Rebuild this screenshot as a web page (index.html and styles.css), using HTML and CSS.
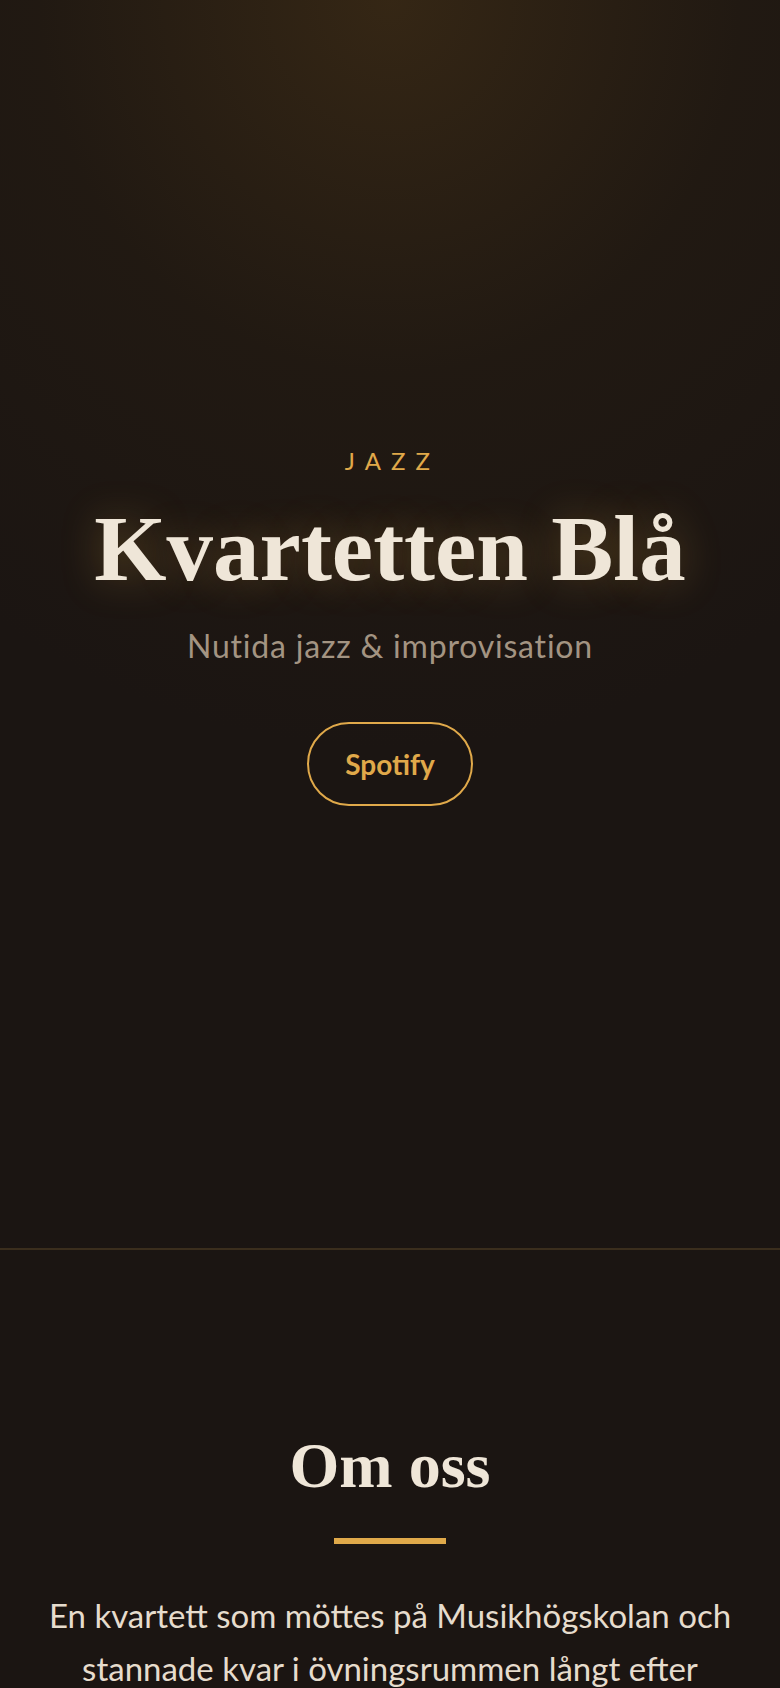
FILE: index.html
```html
<!DOCTYPE html>
<html lang="sv">
<head>
    <meta charset="UTF-8">
    <meta name="viewport" content="width=device-width, initial-scale=1.0">
    <title>Kvartetten Blå</title>
    <link rel="stylesheet" href="styles.css">
</head>
<body>
    <header class="hero">
        <div class="hero-content">
            <p class="eyebrow">Jazz</p>
            <h1 class="title">Kvartetten Blå</h1>
            <p class="tagline">Nutida jazz &amp; improvisation</p>
            <a class="btn" href="#">Spotify</a>
        </div>
    </header>

    <!-- about section -->
    <section class="about">
        <h2>Om oss</h2>
        <div class="rule"></div>
        <p>En kvartett som möttes på Musikhögskolan och stannade kvar i övningsrummen långt efter stängning.</p>
    </section>
</body>
</html>
```

FILE: styles.css
```css
body {
    margin: 0;
    background-color: #1b1512;
    color: #efe6d8;
    font-family: Lato, 'Open Sans', sans-serif;
}

.hero {
    height: 1248px;
    display: flex;
    justify-content: center;
    align-items: center;
    text-align: center;
    border-bottom: 2px solid #3b2e1d;
    background:
        radial-gradient(ellipse 90% 60% at 50% 0%, rgba(64, 46, 22, 0.7) 0%, rgba(40, 30, 18, 0.45) 50%, rgba(27, 21, 18, 0) 100%),
        #1b1512;
}

.hero-content {
    padding-top: 4px;
}

.eyebrow {
    margin: 0;
    color: #e0a94a;
    font-size: 24px;
    letter-spacing: 0.42em;
    text-transform: uppercase;
    padding-left: 0.2em;
}

.title {
    margin: 23px 0 0;
    font-family: 'Liberation Serif', 'Times New Roman', serif;
    font-weight: 700;
    font-size: 93px;
    line-height: 1.1;
    color: #efe6d8;
    text-shadow: 0 0 40px rgba(224, 169, 74, 0.3);
}

.tagline {
    margin: 25px 0 0;
    color: #a39482;
    font-size: 32px;
    letter-spacing: 0.025em;
}

.btn {
    display: inline-block;
    margin-top: 57px;
    padding: 23px 36px;
    border: 2px solid #e0a94a;
    border-radius: 999px;
    color: #e0a94a;
    font-size: 28px;
    font-weight: 700;
    text-decoration: none;
}

.about {
    padding: 178px 48px 0;
    text-align: center;
}

.about h2 {
    margin: 0;
    font-family: 'Liberation Serif', 'Times New Roman', serif;
    font-weight: 700;
    font-size: 64px;
    line-height: 1.2;
}

.rule {
    width: 112px;
    height: 6px;
    margin: 33px auto 0;
    background-color: #e0a94a;
}

.about p {
    margin: 45px 0 0;
    font-size: 33px;
    line-height: 1.6;
    color: #e6dccd;
}
```
